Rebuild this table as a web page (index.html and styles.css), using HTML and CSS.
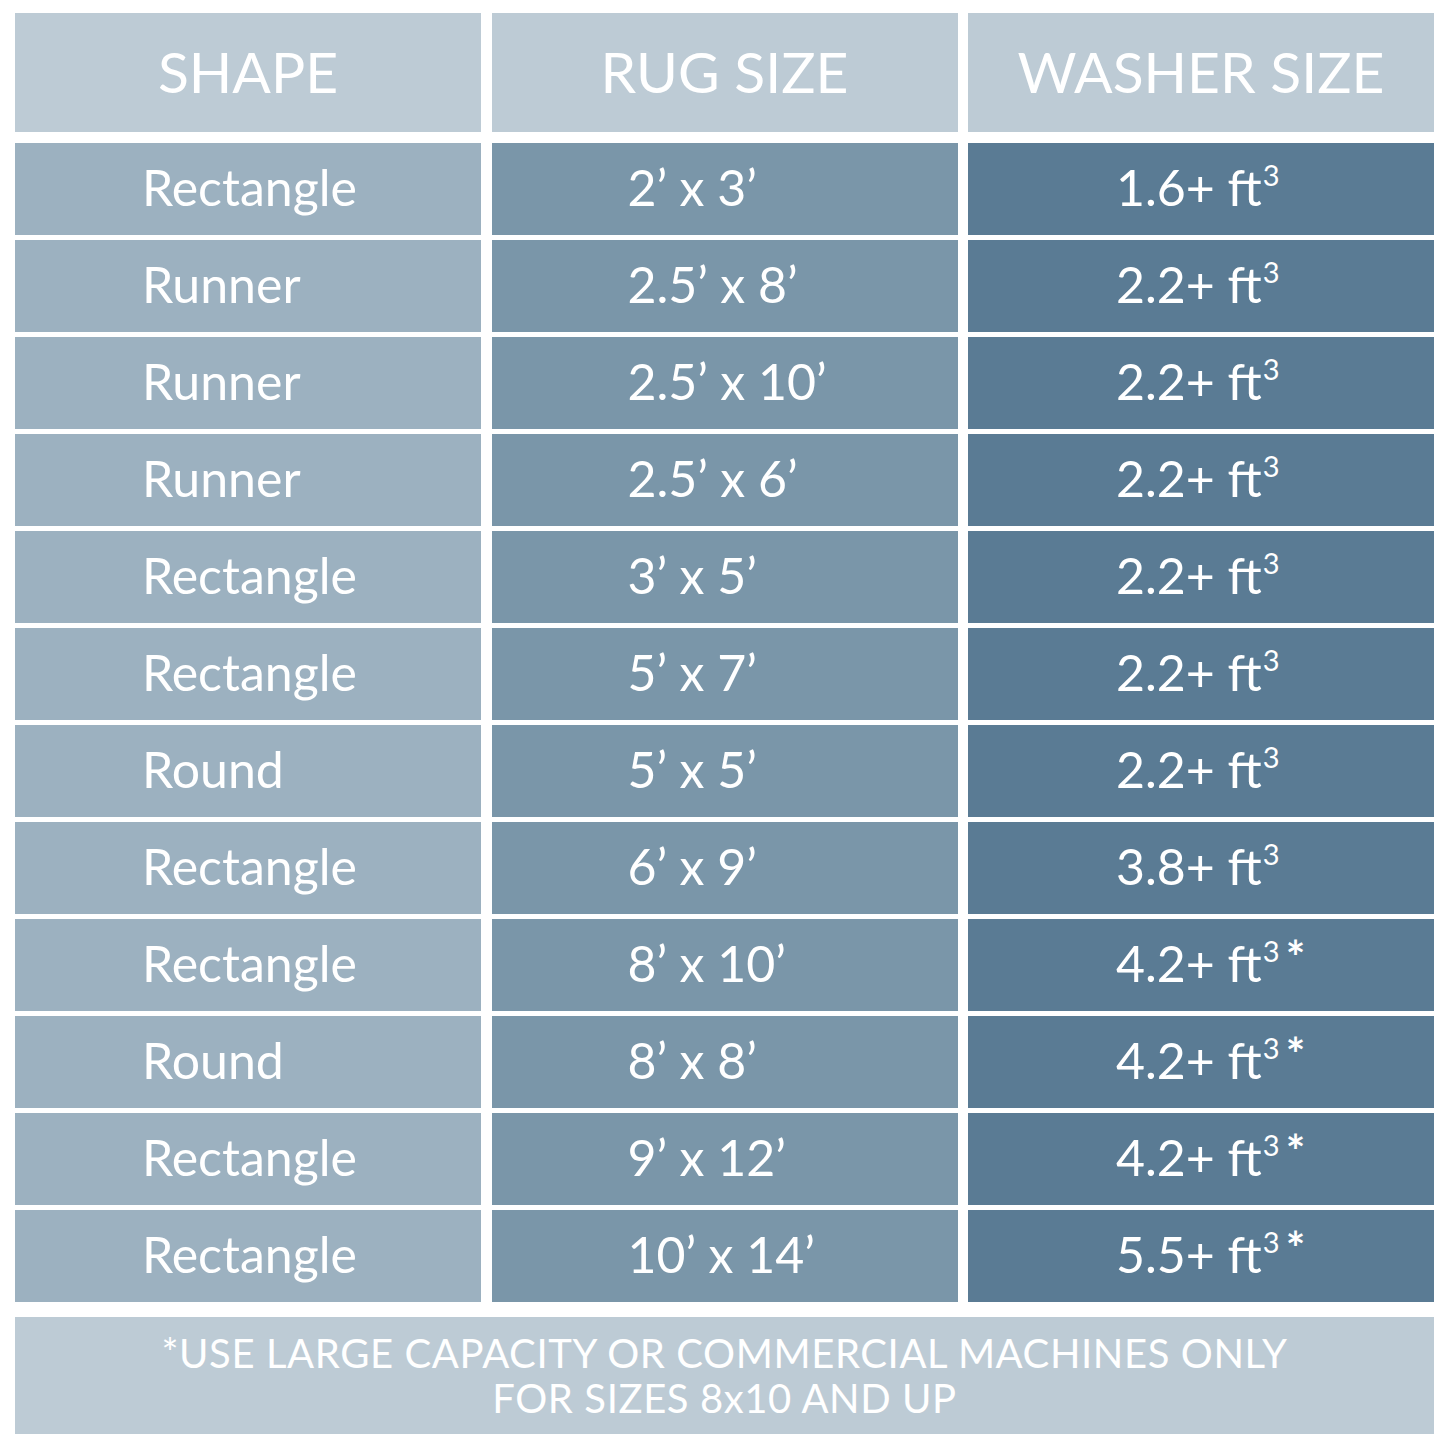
FILE: index.html
```html
<!DOCTYPE html>
<html lang="en">
<head>
<meta charset="utf-8">
<title>Rug Size Washer Chart</title>
<link rel="stylesheet" href="styles.css">
</head>
<body>
<div class="chart">
  <div class="head">
    <div class="hcell">SHAPE</div>
    <div class="hcell">RUG SIZE</div>
    <div class="hcell">WASHER SIZE</div>
  </div>
  <div class="body">
    <div class="c1">Rectangle</div><div class="c2">2’ x 3’</div><div class="c3">1.6+ ft<sup>3</sup></div>
    <div class="c1">Runner</div><div class="c2">2.5’ x 8’</div><div class="c3">2.2+ ft<sup>3</sup></div>
    <div class="c1">Runner</div><div class="c2">2.5’ x 10’</div><div class="c3">2.2+ ft<sup>3</sup></div>
    <div class="c1">Runner</div><div class="c2">2.5’ x 6’</div><div class="c3">2.2+ ft<sup>3</sup></div>
    <div class="c1">Rectangle</div><div class="c2">3’ x 5’</div><div class="c3">2.2+ ft<sup>3</sup></div>
    <div class="c1">Rectangle</div><div class="c2">5’ x 7’</div><div class="c3">2.2+ ft<sup>3</sup></div>
    <div class="c1">Round</div><div class="c2">5’ x 5’</div><div class="c3">2.2+ ft<sup>3</sup></div>
    <div class="c1">Rectangle</div><div class="c2">6’ x 9’</div><div class="c3">3.8+ ft<sup>3</sup></div>
    <div class="c1">Rectangle</div><div class="c2">8’ x 10’</div><div class="c3">4.2+ ft<sup>3</sup><span class="ast">*</span></div>
    <div class="c1">Round</div><div class="c2">8’ x 8’</div><div class="c3">4.2+ ft<sup>3</sup><span class="ast">*</span></div>
    <div class="c1">Rectangle</div><div class="c2">9’ x 12’</div><div class="c3">4.2+ ft<sup>3</sup><span class="ast">*</span></div>
    <div class="c1">Rectangle</div><div class="c2">10’ x 14’</div><div class="c3">5.5+ ft<sup>3</sup><span class="ast">*</span></div>
  </div>
  <div class="foot">*USE LARGE CAPACITY OR COMMERCIAL MACHINES ONLY<br>FOR SIZES 8x10 AND UP</div>
</div>
</body>
</html>
```

FILE: styles.css
```css
html, body {
  margin: 0;
  padding: 0;
  background: #ffffff;
}
body {
  font-family: Lato, "Noto Sans", sans-serif;
  color: #ffffff;
}
.chart {
  padding: 13px 0 0 15px;
  width: 1419px;
}
.head, .body {
  display: grid;
  grid-template-columns: 466px 466px 466px;
  column-gap: 10.5px;
}
.hcell {
  height: 119px;
  background: #bdcbd5;
  display: flex;
  align-items: center;
  justify-content: center;
  font-size: 57px;
  font-weight: 400;
  padding-bottom: 4px;
  box-sizing: border-box;
}
.body {
  margin-top: 10.5px;
  row-gap: 4.5px;
}
.c1, .c2, .c3 {
  height: 92.5px;
  display: flex;
  align-items: center;
  font-size: 50px;
  font-weight: 400;
  white-space: pre;
  padding-bottom: 3px;
  box-sizing: border-box;
}
.c1 { background: #9cb1c0; padding-left: 127px; }
.c2 { background: #7a96a9; padding-left: 136px; }
.c3 { background: #5a7b94; padding-left: 148px; }
.c3 sup {
  font-size: 29px;
  line-height: 1;
  vertical-align: 0;
  position: relative;
  top: -13px;
  margin-left: 1px;
}
.ast {
  font-size: 46px;
  font-weight: 700;
  position: relative;
  top: -7px;
  margin-left: 6px;
}
.foot {
  margin-top: 15px;
  height: 117px;
  background: #bdcbd5;
  display: flex;
  align-items: center;
  justify-content: center;
  text-align: center;
  font-size: 40px;
  font-weight: 400;
  line-height: 45px;
  letter-spacing: 0.6px;
}
```
